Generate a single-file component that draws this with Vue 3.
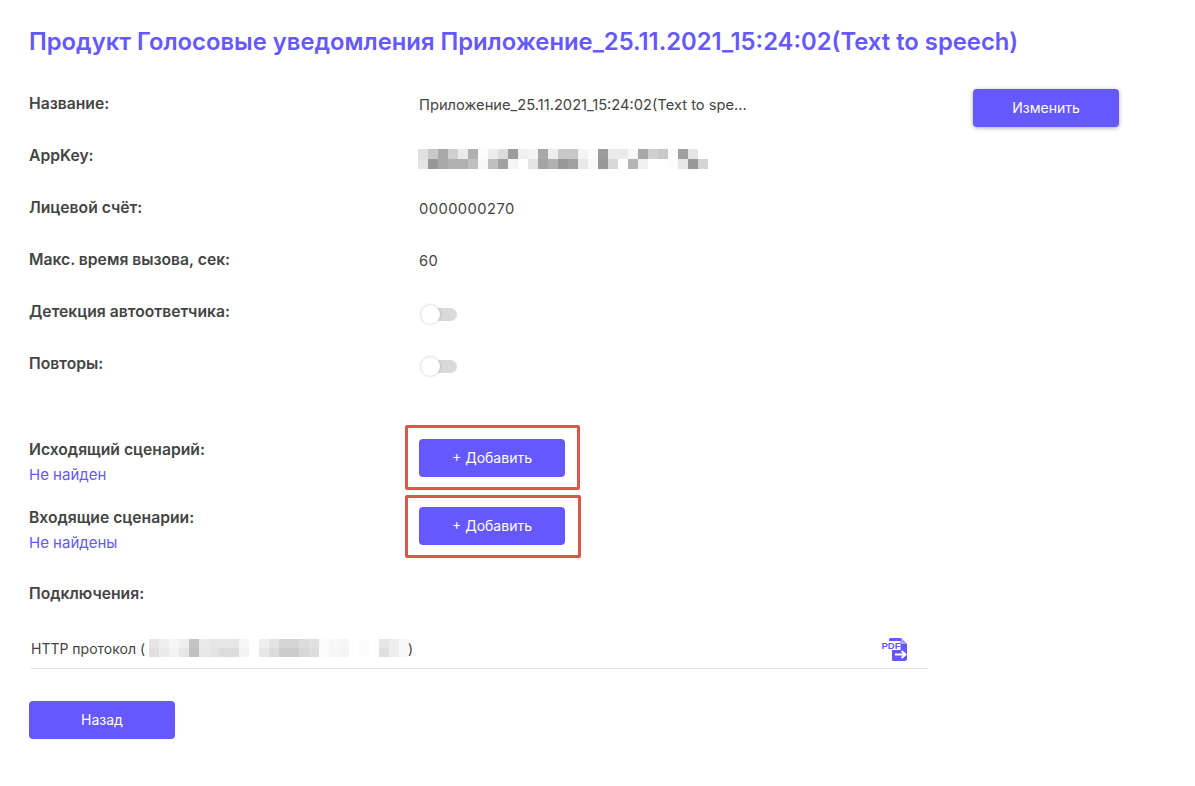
<script setup>
const rows = [
  { label: 'Лицевой счёт:', value: '0000000270' },
  { label: 'Макс. время вызова, сек:', value: '60' }
]
const toggles = ['Детекция автоответчика:', 'Повторы:']

const keyPixels = [
  ['e0', 'c8', 'a8', 'd0', 'ea', 'b0', 'fc', 'ec', 'dc', '9c', 'f0', 'f4', 'a8', 'ee', 'c8', 'c8', 'f4', 'fc', '9c', 'ea', 'ea', 'f8', 'a8', 'd0', 'c8', 'fc', 'a0', 'e4', 'ff'],
  ['e4', '98', 'a8', 'b0', 'b0', 'c0', 'f8', 'c0', 'a0', 'f4', 'ff', 'e4', 'a4', 'b0', '98', 'a0', 'e8', 'f8', '98', 'd8', 'ff', 'b4', 'f0', 'ff', 'ff', 'fc', 'e8', '98', 'd4']
]
const hostPixels = [
  ['e6', 'ee', 'f6', 'ee', 'c4', 'ea', 'e6', 'e6', 'e6', 'f6', 'ff', 'ee', 'e4', 'd4', 'd4', 'dc', 'e0', 'fb', 'f8', 'f6', 'ff', 'fc', 'ff', 'e6', 'ee', 'f8'],
  ['e0', 'ea', 'f2', 'e6', 'c0', 'e8', 'e4', 'dc', 'dc', 'f4', 'ff', 'e8', 'dc', 'cc', 'cc', 'd8', 'dc', 'fb', 'f6', 'f4', 'ff', 'fc', 'ff', 'e0', 'ee', 'f8']
]
const gray = (v) => '#' + v + v + v
</script>

<template>
  <div class="page">
    <h1 class="title">Продукт Голосовые уведомления Приложение_25.11.2021_15:24:02(Text to speech)</h1>

    <div class="info">
      <div class="row">
        <div class="label">Название:</div>
        <div class="value text">Приложение_25.11.2021_15:24:02(Text to spe...</div>
        <button class="btn btn-change">Изменить</button>
      </div>
      <div class="row">
        <div class="label">AppKey:</div>
        <div class="value">
          <div class="mosaic key">
            <div v-for="(line, i) in keyPixels" :key="i" class="mosaic-line">
              <i v-for="(c, j) in line" :key="j" :style="{ background: gray(c) }"></i>
            </div>
          </div>
        </div>
      </div>
      <div v-for="row in rows" :key="row.label" class="row">
        <div class="label">{{ row.label }}</div>
        <div class="value text num">{{ row.value }}</div>
      </div>
      <div v-for="t in toggles" :key="t" class="row">
        <div class="label">{{ t }}</div>
        <div class="value">
          <span class="switch"><span class="knob"></span></span>
        </div>
      </div>
    </div>

    <div class="scenarios">
      <div class="scenario">
        <div>
          <div class="label">Исходящий сценарий:</div>
          <a class="link">Не найден</a>
        </div>
        <div class="mark-wrap">
          <span class="mark first"></span>
          <button class="btn">+ Добавить</button>
        </div>
      </div>
      <div class="scenario">
        <div>
          <div class="label">Входящие сценарии:</div>
          <a class="link">Не найдены</a>
        </div>
        <div class="mark-wrap">
          <span class="mark second"></span>
          <button class="btn">+ Добавить</button>
        </div>
      </div>
    </div>

    <div class="label conn-title">Подключения:</div>
    <div class="conn">
      <div class="conn-name">
        <span class="conn-text">HTTP протокол (</span>
        <div class="mosaic host">
          <div v-for="(line, i) in hostPixels" :key="i" class="mosaic-line">
            <i v-for="(c, j) in line" :key="j" :style="{ background: gray(c) }"></i>
          </div>
        </div>
        <span>)</span>
      </div>
      <svg class="pdf" width="27" height="24" viewBox="0 0 27 24">
        <path d="M8 1.500C8 .7 8.700 0 9.500 0H20l6 6v15c0 1.100-.9 2-2 2H12.500C11.700 23 11 22.300 11 21.500V12H8z" fill="#6558ff" />
        <rect x="0" y="3" width="19.500" height="9" fill="#fff" />
        <text x="0.500" y="11" class="pdf-text">PDF</text>
        <path d="M20 0v5c0 .6.400 1 1 1h5z" fill="#a9a2ff" />
        <path d="M14 16.500h10M20.500 13l4 3.500-4 3.500" fill="none" stroke="#fff" stroke-width="2" />
      </svg>
    </div>

    <button class="btn btn-back">Назад</button>
  </div>
</template>

<style scoped>
.page {
  width: 1195px;
  height: 786px;
  box-sizing: border-box;
  padding: 24px 0 0 29px;
  background: #fff;
  color: #3c3c3c;
  font-family: Inter, "Noto Sans", sans-serif;
  overflow: hidden;
}

.title {
  margin: 0 0 29px;
  height: 25px;
  line-height: 35px;
  font-size: 23.8px;
  font-weight: 600;
  color: #6558ff;
  white-space: nowrap;
}

.row {
  display: flex;
  height: 52px;
  align-items: center;
}

.label {
  width: 390px;
  font-size: 15.7px;
  font-weight: 600;
  line-height: 20px;
  color: #444;
}

.info .label {
  margin-top: -1px;
}

.value {
  width: 554px;
  font-size: 14.7px;
  color: #444;
  white-space: nowrap;
}

.text {
  margin-top: 2px;
}

.num {
  letter-spacing: 0.45px;
}

.btn {
  display: block;
  width: 146px;
  height: 38px;
  padding: 0 0 2px;
  border: 0;
  border-radius: 4px;
  background: #6558ff;
  color: #fff;
  font-family: inherit;
  font-size: 14px;
}

.btn-change {
  margin-top: 8px;
  box-shadow: 0 1px 4px rgba(0, 0, 0, 0.35);
}

.mosaic-line {
  display: flex;
}

.mosaic-line i {
  display: block;
  width: 10px;
  flex: none;
}

.key .mosaic-line i {
  height: 10px;
}

.key {
  margin: 6px 0 0 -1px;
}

.host .mosaic-line i {
  height: 9px;
}

.switch {
  display: block;
  position: relative;
  width: 36px;
  height: 13px;
  margin: 4px 0 0 2px;
  border-radius: 7px;
  background: #d9d9d9;
}

.knob {
  position: absolute;
  top: -3px;
  left: 0;
  width: 19px;
  height: 19px;
  border-radius: 50%;
  background: #fff;
  box-shadow: 0 0 3px rgba(0, 0, 0, 0.25);
}

.scenarios {
  margin-top: 48px;
}

.scenario {
  display: flex;
  height: 68px;
}

.scenario .label {
  margin-top: 2px;
}

.link {
  display: block;
  margin-top: 5px;
  font-size: 15px;
  line-height: 20px;
  color: #6558ff;
}

.mark-wrap {
  position: relative;
  margin-top: 1px;
}

.mark {
  position: absolute;
  left: -14px;
  border: 3px solid #d9574b;
  border-radius: 2px;
  box-sizing: border-box;
}

.mark.first {
  top: -14px;
  width: 175px;
  height: 65px;
}

.mark.second {
  top: -12px;
  width: 176px;
  height: 63px;
}

.conn-title {
  height: 40px;
  line-height: 40px;
}

.conn {
  display: flex;
  align-items: center;
  justify-content: space-between;
  box-sizing: border-box;
  width: 898px;
  height: 55px;
  margin-left: 1px;
  padding: 14px 20px 0 1px;
  border-bottom: 1px solid #e4e4e4;
  font-size: 14px;
  color: #444;
}

.conn-name {
  display: flex;
  align-items: center;
}

.conn-text {
  width: 118px;
  white-space: nowrap;
}

.host {
  margin-right: -1px;
}

.pdf {
  display: block;
  margin-top: 4px;
}

.pdf-text {
  font-family: "Liberation Sans", sans-serif;
  font-size: 9.500px;
  font-weight: 700;
  fill: #6558ff;
}

.btn-back {
  margin-top: 32px;
}
</style>
